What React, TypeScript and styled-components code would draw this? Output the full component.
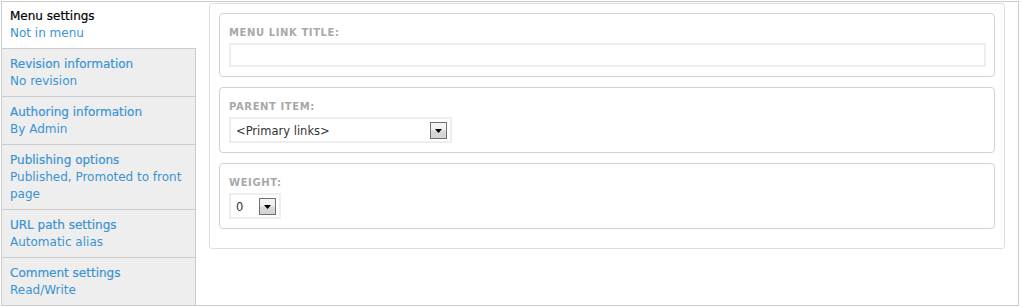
import React from "react";
import styled, { createGlobalStyle } from "styled-components";

const GlobalStyle = createGlobalStyle`
  html, body {
    margin: 0;
    padding: 0;
    background: #ffffff;
  }
  body {
    padding: 1px 0 0 1px;
    font-family: "DejaVu Sans", Verdana, sans-serif;
  }
`;

const Frame = styled.div`
  box-sizing: border-box;
  width: 1018px;
  height: 305px;
  border: 1px solid #cccccc;
  display: flex;
  background: #ffffff;
`;

const TabList = styled.ul`
  list-style: none;
  margin: 0;
  padding: 0;
  width: 193px;
  flex: none;
  display: flex;
  flex-direction: column;
  background: #eeeeee;
  border-right: 1px solid #cccccc;
`;

const Tab = styled.li<{ $active?: boolean }>`
  padding: 6px 10px 6px 8px;
  font-size: 12px;
  line-height: 17px;
  border-bottom: 1px solid #cccccc;
  background: ${({ $active }) => ($active ? "#ffffff" : "#eeeeee")};
  margin-right: ${({ $active }) => ($active ? "-1px" : "0")};
  position: relative;
  &:not(:first-child) {
    padding-top: 7px;
  }
  &:last-child {
    border-bottom: none;
  }
`;

const TabTitle = styled.div<{ $active?: boolean }>`
  color: ${({ $active }) => ($active ? "#000000" : "#3a93d2")};
  -webkit-text-stroke: 0.2px currentColor;
`;

const TabSummary = styled.div`
  color: #3a93d2;
`;

const Content = styled.div`
  flex: 1;
  padding: 1px 13px 0 13px;
`;

const Panel = styled.div`
  border: 1px solid #dedede;
  border-radius: 3px;
  padding: 9px 9px 19px 9px;
  display: flex;
  flex-direction: column;
  gap: 10px;
`;

const FieldBox = styled.div`
  border: 1px solid #d2d2d2;
  border-radius: 4px;
  padding: 12px 8px 9px 9px;
`;

const Label = styled.label`
  display: block;
  margin-bottom: 4px;
  font-size: 10px;
  line-height: 13px;
  font-weight: bold;
  letter-spacing: 0.6px;
  text-transform: uppercase;
  color: #a8a8a8;
`;

const TextInput = styled.div`
  box-sizing: border-box;
  height: 24px;
  border: 2px solid #eeeeee;
  background: #ffffff;
`;

const Select = styled.div<{ $width: number }>`
  box-sizing: border-box;
  width: ${({ $width }) => $width}px;
  height: 26px;
  border: 2px solid #eeeeee;
  background: #ffffff;
  display: flex;
  align-items: center;
  justify-content: space-between;
  padding: 1px 3px 0 5px;
  font-size: 11.5px;
  color: #333333;
`;

const ArrowButton = styled.span`
  box-sizing: border-box;
  width: 17px;
  height: 17px;
  margin-top: -1px;
  border: 1px solid #707070;
  background: linear-gradient(#f4f4f4 0%, #f0f0f0 45%, #d8d8d8 55%, #d4d4d4 100%);
  display: flex;
  align-items: center;
  justify-content: center;
  padding-top: 2px;
`;

function Arrow() {
  return (
    <svg width="7" height="4" viewBox="0 0 7 4">
      <path d="M0 0 H7 L3.5 4 Z" fill="#000" />
    </svg>
  );
}

const tabs = [
  { title: "Menu settings", summary: "Not in menu", active: true },
  { title: "Revision information", summary: "No revision" },
  { title: "Authoring information", summary: "By Admin" },
  { title: "Publishing options", summary: "Published, Promoted to front page" },
  { title: "URL path settings", summary: "Automatic alias" },
  { title: "Comment settings", summary: "Read/Write" },
];

export default function App() {
  return (
    <>
      <GlobalStyle />
      <Frame>
        <TabList>
          {tabs.map((t) => (
            <Tab key={t.title} $active={t.active}>
              <TabTitle $active={t.active}>{t.title}</TabTitle>
              <TabSummary>{t.summary}</TabSummary>
            </Tab>
          ))}
        </TabList>
        <Content>
          <Panel>
            <FieldBox>
              <Label>Menu link title:</Label>
              <TextInput />
            </FieldBox>
            <FieldBox>
              <Label>Parent item:</Label>
              <Select $width={223}>
                <span>&lt;Primary links&gt;</span>
                <ArrowButton>
                  <Arrow />
                </ArrowButton>
              </Select>
            </FieldBox>
            <FieldBox>
              <Label>Weight:</Label>
              <Select $width={52}>
                <span>0</span>
                <ArrowButton>
                  <Arrow />
                </ArrowButton>
              </Select>
            </FieldBox>
          </Panel>
        </Content>
      </Frame>
    </>
  );
}
